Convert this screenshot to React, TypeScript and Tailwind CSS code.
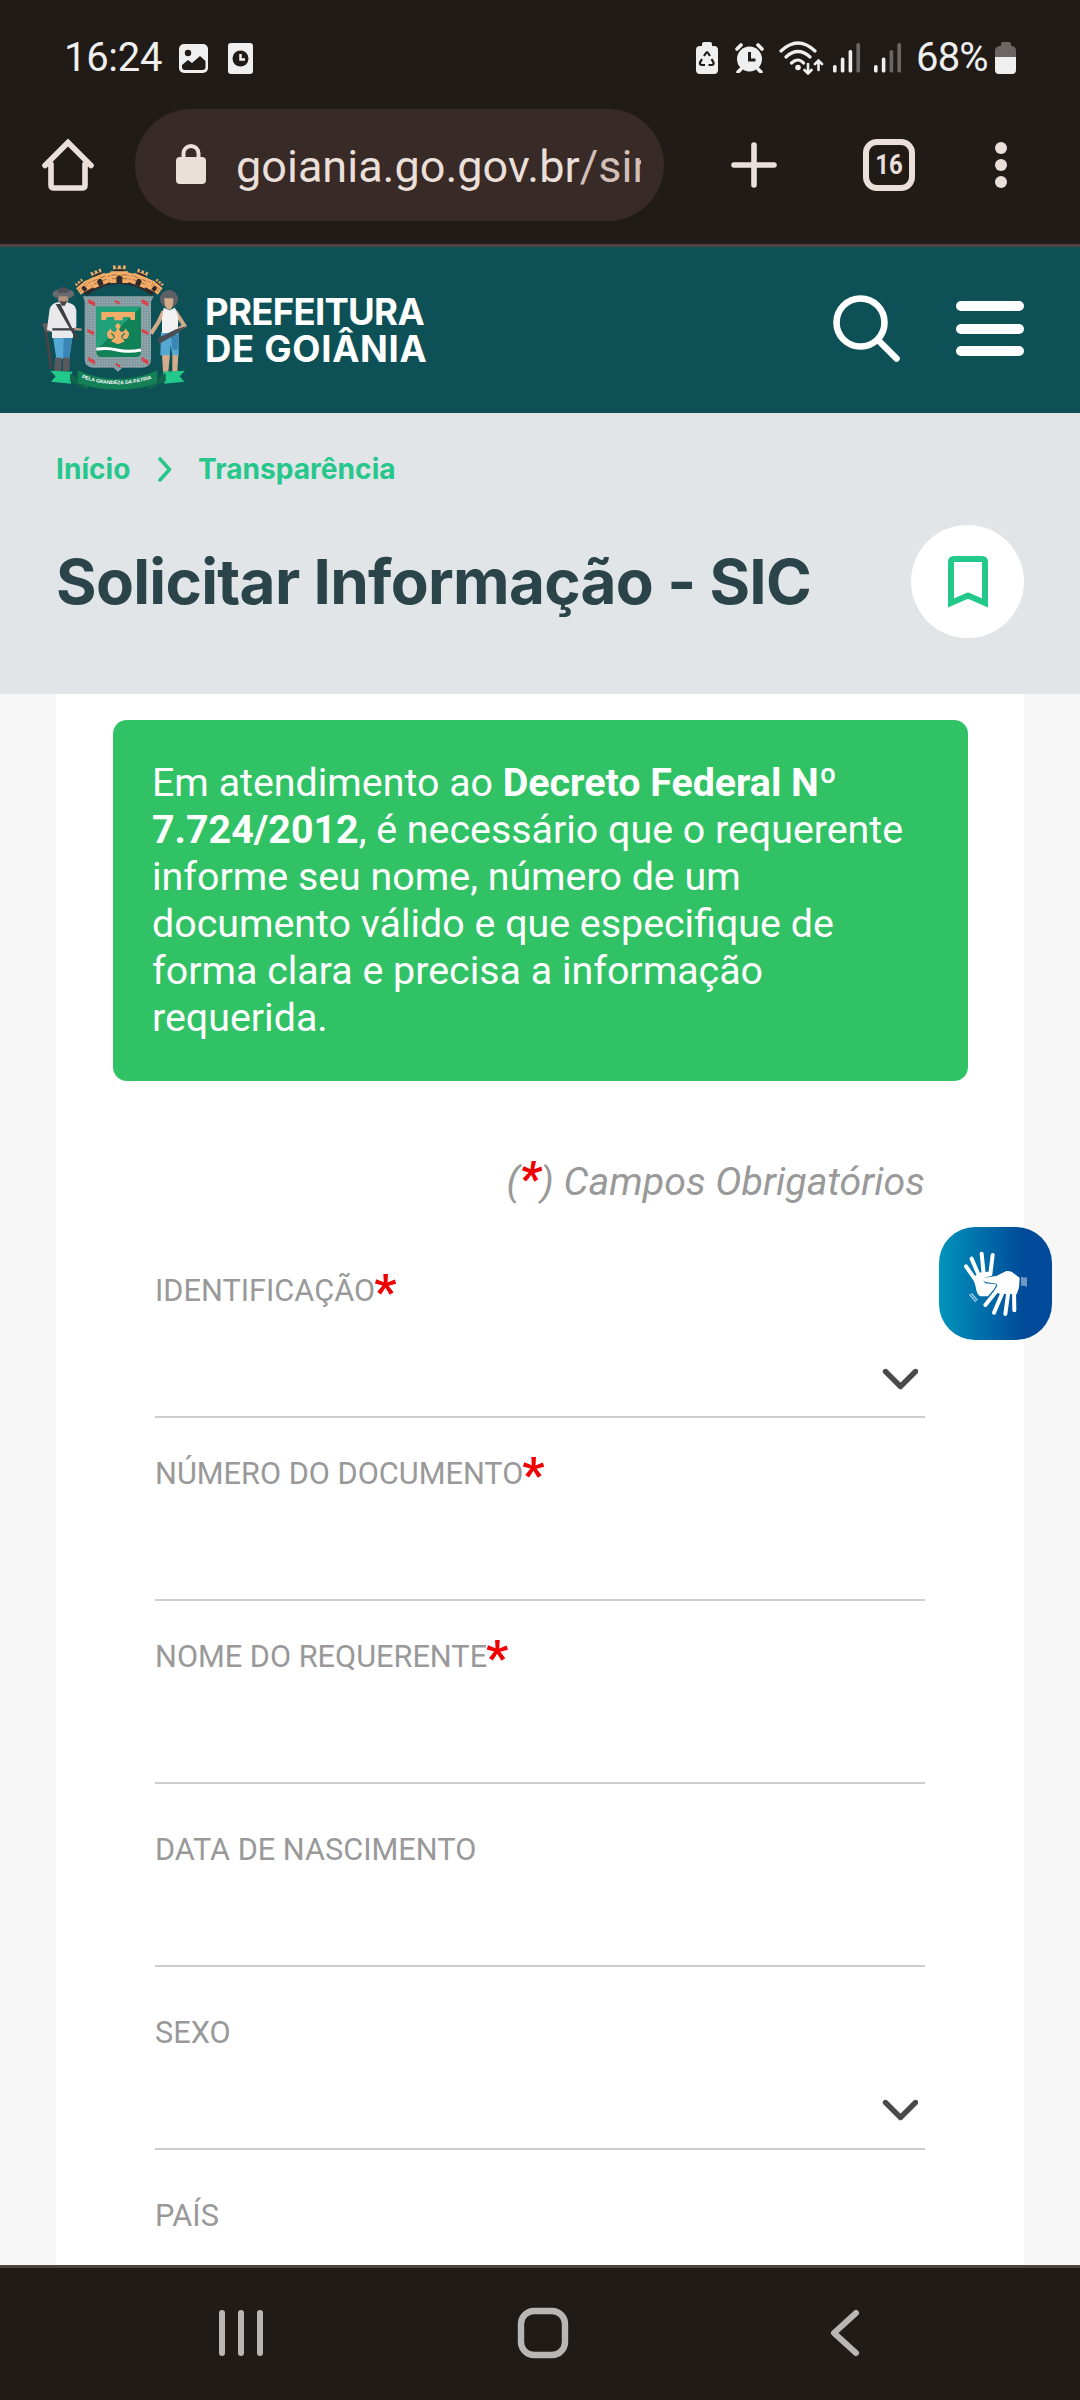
import React from "react";

function StatusBar() {
  return (
    <div className="flex h-[109px] items-start pt-[35px] pl-[64px] text-[40px] leading-[46px] text-[#efefef]">
      <span className="w-[115px] whitespace-nowrap tracking-[-0.3px]">16:24</span>
      <svg className="mt-[9px]" width="30" height="30" viewBox="0 0 30 30">
        <rect width="29" height="29" rx="5" fill="#efefef" />
        <circle cx="9" cy="9" r="3.2" fill="#211b18" />
        <path d="M3 21l6-5 4 3 8-7 5.500 5v6q0 3-3 3H6q-3 0-3-3z" fill="#211b18" />
      </svg>
      <svg className="ml-[19px] mt-[8px]" width="26" height="31" viewBox="0 0 26 31">
        <rect width="25" height="31" rx="3" fill="#efefef" />
        <circle cx="12.500" cy="15.500" r="8" fill="#211b18" />
        <path d="M12.500 11v5.500h4.500" stroke="#efefef" strokeWidth="2.500" fill="none" />
      </svg>
      <svg className="ml-[442px] mt-[7px]" width="22" height="32" viewBox="0 0 22 32">
        <path d="M6 4V2q0-2 2-2h6q2 0 2 2v2h2q4 0 4 4v20q0 4-4 4H4q-4 0-4-4V8q0-4 4-4z" fill="#efefef" />
        <path d="M8 14l2-3q1-1.500 2 0l2 3M15.500 17l2 3.500q.500 2-1.500 2.500h-3.500M9 23H5.500q-2-.500-1.500-2.500l2-3.500" fill="none" stroke="#211b18" strokeWidth="2.200" />
      </svg>
      <svg className="ml-[17px] mt-[8px]" width="29" height="30" viewBox="0 0 29 30">
        <circle cx="14.500" cy="16" r="12.500" fill="#efefef" />
        <path d="M2 6l4-4M27 6l-4-4M6 26l-3 3M23 26l3 3" stroke="#efefef" strokeWidth="3.600" strokeLinecap="round" />
        <path d="M14.500 9v8h6" fill="none" stroke="#211b18" strokeWidth="3" />
      </svg>
      <svg className="ml-[15px] mt-[6px]" width="46" height="34" viewBox="0 0 46 34">
        <g fill="none" stroke="#efefef" strokeWidth="3.200" strokeLinecap="round">
          <path d="M2 10q17-16 34 0M7 16q12-11 24 0M12.500 22q6.500-6 12 0" />
          <path d="M29 23v9M25.500 29l3.500 3.500 3.500-3.500M39.500 29v-9M36 23l3.500-3.500L43 23" strokeWidth="2.600" />
        </g>
        <circle cx="19" cy="26.500" r="2.800" fill="#efefef" />
      </svg>
      <SignalBars strong={3} className="ml-[8px] mt-[8px]" />
      <SignalBars strong={2} className="ml-[13px] mt-[8px]" />
      <span className="ml-[14px] w-[79px] whitespace-nowrap tracking-[-0.8px]">68%</span>
      <svg className="mt-[7px]" width="22" height="32" viewBox="0 0 22 32">
        <path d="M6 4V2q0-2 2-2h6q2 0 2 2v2q5 0 5 5v6H0V9q0-5 6-5z" fill="#6b6664" />
        <path d="M0 15h21v13q0 4-4 4H4q-4 0-4-4z" fill="#efefef" />
      </svg>
    </div>
  );
}

function SignalBars({ strong, className }: { strong: number; className: string }) {
  return (
    <svg className={className} width="28" height="30" viewBox="0 0 28 30">
      {[22, 14.5, 7, 0].map((y, i) => (
        <rect key={y} x={i * 7.8} y={y} width="3.600" height={29.5 - y} rx="1.600" fill={i < strong ? "#efefef" : "#6b6664"} />
      ))}
    </svg>
  );
}

function BrowserBar() {
  return (
    <div className="flex h-[135px] items-start">
      <svg className="mt-[29px] ml-[41px]" width="54" height="54" viewBox="0 0 54 54" fill="none" stroke="#ebdfda" strokeWidth="5.600" strokeLinecap="round" strokeLinejoin="round">
        <path d="M4 27.500L27 4.500l23 23M10 26v21q0 3 3 3h28q3 0 3-3V26" strokeLinejoin="miter" />
      </svg>
      <div className="ml-[40px] flex h-[112px] w-[529px] items-center rounded-full bg-[#382a26] pl-[41px]">
        <svg className="mb-[2px] shrink-0" width="30" height="40" viewBox="0 0 30 40">
          <rect y="13" width="30" height="27" rx="4" fill="#ebdfda" />
          <path d="M7.500 15v-5.500a7.500 7.500 0 0115 0V15" fill="none" stroke="#ebdfda" strokeWidth="4" />
        </svg>
        <div className="mt-[4px] ml-[30px] w-[405px] overflow-hidden whitespace-nowrap text-[45px] leading-[60px] text-[#ebdfda]">
          goiania.go.gov.br<span className="text-[#d3bfb7]">/sinfo</span>
        </div>
      </div>
      <svg className="mt-[33px] ml-[67px]" width="46" height="46" viewBox="0 0 46 46" stroke="#ebdfda" strokeWidth="5.600" strokeLinecap="round">
        <path d="M23 3v40M3 23h40" />
      </svg>
      <div className="mt-[30px] ml-[86px] flex h-[52px] w-[52px] items-center justify-center rounded-[14px] border-[6px] border-[#ebdfda]">
        <span className="scale-x-[0.86] text-[28px] font-bold leading-none text-[#ebdfda]">16</span>
      </div>
      <div className="mt-[33px] ml-[80px] flex flex-col gap-[5px]">
        <i className="h-[12px] w-[12px] rounded-full bg-[#ebdfda]" />
        <i className="h-[12px] w-[12px] rounded-full bg-[#ebdfda]" />
        <i className="h-[12px] w-[12px] rounded-full bg-[#ebdfda]" />
      </div>
    </div>
  );
}

function Tower({ transform }: { transform: string }) {
  return (
    <g transform={transform}>
      <path d="M-9-13h4v4h3v-4h4v4h3v-4h4l-1 6H-8z" fill="#f3ad69" />
      <path d="M-7-8H7V-5H-7z" fill="#2e2a2c" />
      <path d="M-12-5h24l1 16h-26z" fill="#f3ad69" />
      <path d="M-11 0h8M3 0h8M-10 5h6M4 5h7" stroke="#9a6337" strokeWidth="1.200" />
      <path d="M-4 11V3q4-5 8 0v8z" fill="#2e2a2c" />
    </g>
  );
}

function Crest() {
  return (
    <svg width="180" height="145" viewBox="0 0 540 435">
      <defs>
        <pattern id="weave" width="8" height="8" patternUnits="userSpaceOnUse">
          <rect width="8" height="8" fill="#6f8b92" />
          <path d="M0 3h5M3 7h5" stroke="#c3ccd0" strokeWidth="2" />
        </pattern>
        <path id="motto" d="M158 369Q265 406 374 369" />
      </defs>
      <path d="M146 92Q208 50 271 50T396 92L366 118Q320 84 271 84T174 118Z" fill="#f3ad69" />
      <path d="M152 99Q210 62 271 60T390 99M160 107Q212 74 271 71T382 107" fill="none" stroke="#9a6337" strokeWidth="2" strokeDasharray="18 5" />
      <path d="M164 112l10 10Q222 86 271 86t97 36l10-10Q322 78 271 78t-107 34z" fill="#2e2a2c" />
      <Tower transform="translate(160 94) rotate(-40) scale(1.500 1.500)" />
      <Tower transform="translate(382 94) rotate(40) scale(1.500 1.500)" />
      <Tower transform="translate(209 71) rotate(-22) scale(1.900 2)" />
      <Tower transform="translate(333 71) rotate(22) scale(1.900 2)" />
      <Tower transform="translate(271 60) scale(2.200 2.200)" />
      <path d="M162 124H374L366 140V312Q366 338 340 338H280L267 350 254 338H194Q167 338 167 312V140Z" fill="url(#weave)" />
      <path d="M202 155H336V290Q336 306 320 306H218Q202 306 202 290Z" fill="#118158" />
      <path d="M202 155H336L202 285Z" fill="#20a179" />
      <path d="M217 171H318V195H306L302 186H281V196H256V186H234L230 195H217Z" fill="#f3ad69" />
      <path d="M267 203l9 10-6 10 6 8q15-3 12-12l12 14q0 26-22 16l10 10-21 9-21-9 10-10q-22 10-22-16l12-14q-3 9 12 12l6-8-6-10z" fill="#f3ad69" />
      <path d="M247 235q12 10 7 14M287 235q-12 10-7 14" stroke="#118158" strokeWidth="4" fill="none" />
      <path d="M202 283q30-6 62 2t72 0" fill="none" stroke="#fff" strokeWidth="9" />
      <path d="M178 132l20 10v12l-20-10zM338 132l20 10v12l-20-10zM175 221l20 10v10l-20-10zM338 221l20 10v10l-20-10zM178 305l20 12v12l-20-12zM338 305l20 12v12l-20-12zM257 134l15 8v7l-15-8zM260 324l14 7v7l-14-7z" fill="#dc3f48" />
      <path d="M50 215L66 342" stroke="#474347" strokeWidth="9" />
      <path d="M40 206l18-2 10 28H50z" fill="#665e5d" />
      <path d="M72 246H130L121 312H82Z" fill="#55a8d4" />
      <path d="M104 246h26l-9 66h-19z" fill="#3c86b6" />
      <path d="M78 308H99L96 348H76ZM103 308H123L121 348H101Z" fill="#59585c" />
      <path d="M86 142Q64 146 61 168L54 224 69 230V249H132V228L142 216V166Q140 147 114 142Z" fill="#e9e9eb" />
      <path d="M80 148l14-2 38 78 17 22-7 9z" fill="#3d4045" />
      <path d="M70 223h76" stroke="#3d4045" strokeWidth="7" />
      <path d="M86 122q0 26 17 26t16-26z" fill="#b49580" />
      <path d="M92 134q11 8 22 0l-6 18h-10z" fill="#474347" />
      <ellipse cx="103" cy="117" rx="33" ry="15" fill="#696b70" />
      <path d="M86 113q0-16 17-16t17 16z" fill="#4d5056" />
      <path d="M90 124q0 16 13 16t13-16z" fill="#b49580" />
      <path d="M136 222l22 2" stroke="#b49580" strokeWidth="7" />
      <path d="M399 298H423L418 350H402ZM430 298H448L445 350H430Z" fill="#d3ac8c" />
      <path d="M396 232h53v69H430l-5-30-3 30H394z" fill="#55a8d4" />
      <path d="M426 240h23l-4 44h-15z" fill="#3c86b6" />
      <path d="M404 168L388 202 366 236M438 168L466 212 442 227" stroke="#d3ac8c" strokeWidth="12" fill="none" />
      <path d="M404 158l17 8 17-8 10 28-2 48h-47V187z" fill="#f2f2f3" />
      <circle cx="420" cy="132" r="27" fill="#5e6165" />
      <path d="M406 130q0 34 14 34t13-34z" fill="#d3ac8c" />
      <path d="M385 250l56-27 32-10-30 24-52 29z" fill="#4a4f56" />
      <path d="M64 347L130 350 126 386 66 380 80 364Z" fill="#22c98b" />
      <path d="M468 347L402 350 406 386 466 380 452 364Z" fill="#22c98b" />
      <path d="M123 354l54 36v14l-54-25zM410 354l-54 36v14l54-25z" fill="#10674e" />
      <path d="M145 345Q267 398 386 345V386Q267 424 145 386Z" fill="#148058" stroke="#0d5945" strokeWidth="2" />
      <text fill="#fff" fontSize="15" fontWeight="700" fontFamily="Liberation Sans, sans-serif">
        <textPath href="#motto">PELA GRANDEZA DA PÁTRIA</textPath>
      </text>
    </svg>
  );
}

function SiteHeader() {
  return (
    <header className="flex h-[166px] bg-[#0d5156] font-[Inter,sans-serif]">
      <div className="mt-[8px] ml-[29px] w-[176px] shrink-0">
        <Crest />
      </div>
      <div className="mt-[47px] w-[261px] whitespace-nowrap text-[36.500px] font-bold leading-[37px] text-white">
        <div className="tracking-[-0.700px]">PREFEITURA</div>
        <div className="tracking-[0.700px]">DE GOIÂNIA</div>
      </div>
      <svg className="mt-[47px] ml-[366px]" width="70" height="70" viewBox="0 0 70 70" fill="none" stroke="#fff" strokeWidth="6.600" strokeLinecap="round">
        <circle cx="28.500" cy="28.500" r="24" />
        <path d="M46.500 46.500l18 18" />
      </svg>
      <div className="mt-[54px] ml-[54px] flex w-[68px] flex-col gap-[12.500px]">
        <i className="h-[10px] rounded-full bg-white" />
        <i className="h-[10px] rounded-full bg-white" />
        <i className="h-[10px] rounded-full bg-white" />
      </div>
    </header>
  );
}

function PageHeading() {
  return (
    <section className="h-[281px] bg-[#e1e5e8] px-[56px] pt-[39px] font-[Inter,sans-serif]">
      <nav className="flex h-[34px] items-center text-[28.125px] font-bold leading-[34px] text-[#27c78c]">
        <span className="w-[101px]">Início</span>
        <svg width="15" height="25" viewBox="0 0 15 25" fill="none" stroke="#27c78c" strokeWidth="3.600" strokeLinecap="round" strokeLinejoin="round">
          <path d="M3 2l9.500 10.500L3 23" />
        </svg>
        <span className="ml-[26px]">Transparência</span>
      </nav>
      <div className="mt-[39px] flex h-[113px] items-center justify-between">
        <h1 className="whitespace-nowrap text-[62px] font-bold leading-[72px] tracking-[-0.700px] text-[#2a444a]">Solicitar Informação - SIC</h1>
        <div className="flex h-[113px] w-[113px] shrink-0 items-center justify-center rounded-full bg-white">
          <svg width="40" height="52" viewBox="0 0 40 52" fill="none" stroke="#22c98b" strokeWidth="6">
            <path d="M3 47V6q0-3 3-3h28q3 0 3 3v41l-17-7.500z" />
          </svg>
        </div>
      </div>
    </section>
  );
}

function Field({ label, required, select }: { label: string; required?: boolean; select?: boolean }) {
  return (
    <div className="flex h-[183px] shrink-0 flex-col border-b-2 border-[#cdcdcd]">
      <div className={required ? "mt-[36px] flex h-[40px] text-[30.700px] leading-[40px] text-[#999]" : "mt-[46px] flex h-[40px] text-[30.700px] leading-[40px] text-[#999]"}>
        <span className="whitespace-nowrap">{label}</span>
        {required && <span className="-ml-px text-[49px] font-bold leading-[41px] text-[#f00000]">*</span>}
      </div>
      {select && (
        <svg className={required ? "mt-[57px] mr-[7px] self-end" : "mt-[46px] mr-[7px] self-end"} width="36" height="22" viewBox="0 0 36 22" fill="none" stroke="#4a4a4a" strokeWidth="5.400" strokeLinecap="round" strokeLinejoin="round">
          <path d="M3.500 3.500l15 15 15-15" />
        </svg>
      )}
    </div>
  );
}

function LibrasButton() {
  return (
    <button className="absolute top-[1227px] left-[939px] h-[113px] w-[113px] rounded-[36px] bg-linear-to-r from-[#0094bc] to-[#004a99] to-75%">
      <svg width="113" height="113" viewBox="9 9 339 339" fill="none" stroke="#fff" strokeLinecap="round" strokeLinejoin="round">
        <path d="M90 127L120 170M107 104L131 160M137 89L143 150M170 93L163 150" strokeWidth="12" />
        <path d="M114 162L132 148 165 145 166 153 146 159Q134 170 148 180L178 183 172 194 155 214H133Q124 208 122 190Z" fill="#fff" strokeWidth="5" />
        <path d="M148 164L184 158 212 144Q224 142 234 152L248 163 246 190 240 208 192 206 178 202 188 184 182 176 154 172Q142 170 148 164Z" fill="#fff" strokeWidth="6" />
        <path d="M186 196L148 243M202 200L174 266M217 204L208 270M234 200L235 259" strokeWidth="12" />
        <path d="M101 212l17 20M107 209l16 19M258 160v24M264 162v22M270 162v24" strokeWidth="4" opacity="0.650" />
      </svg>
    </button>
  );
}

function SystemNav() {
  return (
    <footer className="flex h-[135px] border-t-[3px] border-[#4f423c] bg-[#211b18] pt-[38px] pl-[216px]">
      <svg width="50" height="54" viewBox="0 0 50 54" stroke="#b9b7b5" strokeWidth="6" strokeLinecap="round">
        <path d="M6 7v40M25 7v40M44 7v40" />
      </svg>
      <svg className="ml-[250px]" width="54" height="54" viewBox="0 0 54 54" fill="none" stroke="#b9b7b5" strokeWidth="6.400">
        <rect x="5" y="5" width="44" height="44" rx="13" />
      </svg>
      <svg className="ml-[256px]" width="36" height="54" viewBox="0 0 36 54" fill="none" stroke="#b9b7b5" strokeWidth="6" strokeLinecap="round" strokeLinejoin="round">
        <path d="M30 7L8 27l22 20" />
      </svg>
    </footer>
  );
}

export default function App() {
  return (
    <div className="relative flex h-[2400px] w-[1080px] flex-col overflow-hidden bg-[#f7f7f8] font-[Roboto,sans-serif]">
      <div className="h-[247px] shrink-0 border-b-[3px] border-[#4f4441] bg-[#211b18]">
        <StatusBar />
        <BrowserBar />
      </div>
      <SiteHeader />
      <PageHeading />
      <main className="mx-[56px] h-[1571px] overflow-hidden bg-white pt-[26px]">
        <div className="ml-[57px] h-[361px] w-[855px] rounded-[14px] bg-[#32c266] pt-[39px] pl-[39px] text-[39.375px] leading-[47px] text-white">
          Em atendimento ao <b>Decreto Federal Nº</b>
          <br />
          <b>7.724/2012</b>, é necessário que o requerente
          <br />
          informe seu nome, número de um
          <br />
          documento válido e que especifique de
          <br />
          forma clara e precisa a informação
          <br />
          requerida.
        </div>
        <form className="mr-[99px] ml-[99px] flex flex-col">
          <p className="mt-[77px] mb-[30px] h-[47px] text-right text-[39.375px] italic leading-[47px] whitespace-nowrap text-[#999]">
            (<b className="text-[48px] leading-[0] text-[#f00000]">*</b>) Campos Obrigatórios
          </p>
          <Field label="IDENTIFICAÇÃO" required select />
          <Field label="NÚMERO DO DOCUMENTO" required />
          <Field label="NOME DO REQUERENTE" required />
          <Field label="DATA DE NASCIMENTO" />
          <Field label="SEXO" select />
          <Field label="PAÍS" />
        </form>
      </main>
      <SystemNav />
      <LibrasButton />
    </div>
  );
}
